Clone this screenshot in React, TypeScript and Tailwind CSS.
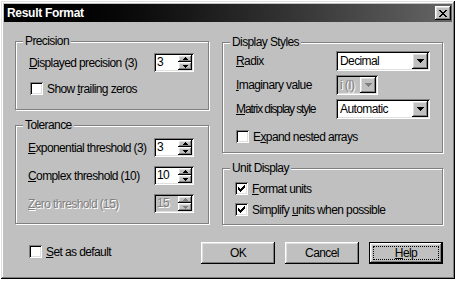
import React from "react";

const raised =
  "shadow-[inset_-1px_-1px_0_#000,inset_1px_1px_0_#fff,inset_-2px_-2px_0_#808080,inset_2px_2px_0_#dfdfdf]";
const sunken =
  "shadow-[inset_1px_1px_0_#808080,inset_-1px_-1px_0_#fff,inset_2px_2px_0_#000,inset_-2px_-2px_0_#dfdfdf]";

function Group({
  label,
  className,
  children,
}: {
  label: string;
  className: string;
  children?: React.ReactNode;
}) {
  return (
    <div
      className={`relative border border-[#808080] shadow-[inset_1px_1px_0_#fff,1px_1px_0_#fff] ${className}`}
    >
      <span className="absolute left-[7px] top-[-8px] bg-[#c0c0c0] px-[2px] leading-[14px] whitespace-nowrap">
        {label}
      </span>
      {children}
    </div>
  );
}

function CheckMark() {
  return (
    <svg width="7" height="7" viewBox="0 0 7 7" shapeRendering="crispEdges" className="block">
      <rect x="6" y="0" width="1" height="1" fill="#000" />
      <rect x="5" y="1" width="2" height="1" fill="#000" />
      <rect x="0" y="2" width="1" height="1" fill="#000" />
      <rect x="4" y="2" width="3" height="1" fill="#000" />
      <rect x="0" y="3" width="2" height="1" fill="#000" />
      <rect x="3" y="3" width="3" height="1" fill="#000" />
      <rect x="0" y="4" width="5" height="1" fill="#000" />
      <rect x="1" y="5" width="3" height="1" fill="#000" />
      <rect x="2" y="6" width="1" height="1" fill="#000" />
    </svg>
  );
}

function Checkbox({ checked, children }: { checked?: boolean; children: React.ReactNode }) {
  return (
    <div className="flex items-center h-[13px] gap-[4px]">
      <span className={`flex items-center justify-center w-[13px] h-[13px] bg-white shrink-0 ${sunken}`}>
        {checked && <CheckMark />}
      </span>
      <span className="leading-[14px] whitespace-nowrap">{children}</span>
    </div>
  );
}

function DownArrow({ color = "#000" }: { color?: string }) {
  return (
    <svg width="7" height="4" viewBox="0 0 7 4" shapeRendering="crispEdges" className="block">
      <rect x="0" y="0" width="7" height="1" fill={color} />
      <rect x="1" y="1" width="5" height="1" fill={color} />
      <rect x="2" y="2" width="3" height="1" fill={color} />
      <rect x="3" y="3" width="1" height="1" fill={color} />
    </svg>
  );
}

function SmallArrow({ up, color = "#000" }: { up?: boolean; color?: string }) {
  return (
    <svg width="5" height="3" viewBox="0 0 5 3" shapeRendering="crispEdges" className="block">
      {up ? (
        <>
          <rect x="2" y="0" width="1" height="1" fill={color} />
          <rect x="1" y="1" width="3" height="1" fill={color} />
          <rect x="0" y="2" width="5" height="1" fill={color} />
        </>
      ) : (
        <>
          <rect x="0" y="0" width="5" height="1" fill={color} />
          <rect x="1" y="1" width="3" height="1" fill={color} />
          <rect x="2" y="2" width="1" height="1" fill={color} />
        </>
      )}
    </svg>
  );
}

function Combo({
  value,
  className,
  disabled,
}: {
  value: string;
  className: string;
  disabled?: boolean;
}) {
  return (
    <div
      className={`flex h-[20px] p-[2px] ${disabled ? "bg-[#c0c0c0]" : "bg-white"} ${sunken} ${className}`}
    >
      <div
        className={`flex-1 pl-[2px] leading-[16px] whitespace-nowrap overflow-hidden ${
          disabled ? "text-[#808080] [text-shadow:1px_1px_0_#fff]" : ""
        }`}
      >
        {value}
      </div>
      <div className={`flex items-center justify-center w-[16px] h-[16px] bg-[#c0c0c0] ${raised}`}>
        <DownArrow color={disabled ? "#808080" : "#000"} />
      </div>
    </div>
  );
}

function Spinner({ value, disabled }: { value: string; disabled?: boolean }) {
  return (
    <div
      className={`flex w-[40px] h-[19px] p-[2px] shrink-0 ${disabled ? "bg-[#c0c0c0]" : "bg-white"} ${sunken}`}
    >
      <div
        className={`flex-1 pl-[1px] leading-[15px] ${
          disabled ? "text-[#808080] [text-shadow:1px_1px_0_#fff]" : ""
        }`}
      >
        {value}
      </div>
      <div className="flex flex-col w-[14px]">
        <div className={`flex items-center justify-center h-[7px] bg-[#c0c0c0] ${raised}`}>
          <SmallArrow up color={disabled ? "#808080" : "#000"} />
        </div>
        <div className={`flex items-center justify-center h-[8px] bg-[#c0c0c0] ${raised}`}>
          <SmallArrow color={disabled ? "#808080" : "#000"} />
        </div>
      </div>
    </div>
  );
}

function Button({ children, def }: { children: React.ReactNode; def?: boolean }) {
  if (def) {
    return (
      <div className="w-[74px] h-[22px] border border-black">
        <div className={`w-full h-full p-[3px] bg-[#c0c0c0] ${raised}`}>
          <div className="w-full h-full border border-dotted border-black flex items-center justify-center leading-[14px]">
            {children}
          </div>
        </div>
      </div>
    );
  }
  return (
    <div
      className={`w-[74px] h-[22px] flex items-center justify-center bg-[#c0c0c0] leading-[14px] ${raised}`}
    >
      {children}
    </div>
  );
}

function CloseGlyph() {
  const rows: [number, number][][] = [
    [[0, 2], [6, 2]],
    [[1, 2], [5, 2]],
    [[2, 4]],
    [[3, 2]],
    [[2, 4]],
    [[1, 2], [5, 2]],
    [[0, 2], [6, 2]],
  ];
  return (
    <svg width="8" height="7" viewBox="0 0 8 7" shapeRendering="crispEdges" className="block">
      {rows.map((r, y) =>
        r.map(([x, w], i) => <rect key={`${y}-${i}`} x={x} y={y} width={w} height={1} fill="#000" />)
      )}
    </svg>
  );
}

export default function App() {
  return (
    <div className="w-[458px] h-[281px] bg-white overflow-hidden pt-[1px] pl-[1px] font-['Liberation_Sans',Arial,sans-serif] text-[12px] tracking-[-0.6px] text-black">
      <div
        className={`w-[454px] h-[278px] bg-[#c0c0c0] p-[3px] flex flex-col shadow-[inset_-1px_-1px_0_#000,inset_1px_1px_0_#dfdfdf,inset_-2px_-2px_0_#808080,inset_2px_2px_0_#fff]`}
      >
        {/* Title bar */}
        <div className="h-[18px] flex items-center justify-between bg-gradient-to-r from-[#000000] to-[#666666]">
          <span className="pl-[3px] text-white font-bold leading-[16px] tracking-[-0.3px]">
            Result Format
          </span>
          <div className={`mr-[1px] w-[16px] h-[14px] flex items-center justify-center bg-[#c0c0c0] ${raised}`}>
            <CloseGlyph />
          </div>
        </div>

        {/* Body */}
        <div className="flex flex-col pl-[11px] pr-[9px] pt-[19px]">
          <div className="flex">
            {/* Left column */}
            <div className="w-[194px] flex flex-col">
              <Group label="Precision" className="h-[69px] pt-[11px] pl-[13px] pr-[14px]">
                <div className="flex items-center justify-between h-[19px]">
                  <span className="leading-[14px]">
                    <u>D</u>isplayed precision (3)
                  </span>
                  <Spinner value="3" />
                </div>
                <div className="mt-[10px] pl-[1px]">
                  <Checkbox>
                    Show <u>t</u>railing zeros
                  </Checkbox>
                </div>
              </Group>
              <Group label="Tolerance" className="mt-[15px] h-[99px] pt-[12px] pl-[12px] pr-[14px]">
                <div className="flex flex-col gap-[9px]">
                  <div className="flex items-center justify-between h-[19px]">
                    <span className="leading-[14px]">
                      <u>E</u>xponential threshold (3)
                    </span>
                    <Spinner value="3" />
                  </div>
                  <div className="flex items-center justify-between h-[19px]">
                    <span className="leading-[14px]">
                      <u>C</u>omplex threshold (10)
                    </span>
                    <Spinner value="10" />
                  </div>
                  <div className="flex items-center justify-between h-[19px]">
                    <span className="leading-[14px] text-[#808080] [text-shadow:1px_1px_0_#fff]">
                      <u>Z</u>ero threshold (15)
                    </span>
                    <Spinner value="15" disabled />
                  </div>
                </div>
              </Group>
            </div>

            {/* Right column */}
            <div className="ml-[13px] mt-[1px] w-[221px] flex flex-col">
              <Group label="Display Styles" className="h-[111px] pt-[8px] pl-[13px]">
                <div className="flex flex-col gap-[4px]">
                  <div className="flex items-center h-[20px]">
                    <span className="w-[100px] leading-[14px]">
                      <u>R</u>adix
                    </span>
                    <Combo value="Decimal" className="w-[94px]" />
                  </div>
                  <div className="flex items-center h-[20px]">
                    <span className="w-[100px] leading-[14px]">
                      <u>I</u>maginary value
                    </span>
                    <Combo value="i (I)" className="w-[42px]" disabled />
                  </div>
                  <div className="flex items-center h-[20px]">
                    <span className="w-[100px] leading-[14px] whitespace-nowrap tracking-[-1.1px]">
                      <u>M</u>atrix display style
                    </span>
                    <Combo value="Automatic" className="w-[94px]" />
                  </div>
                </div>
                <div className="mt-[11px]">
                  <Checkbox>
                    E<u>x</u>pand nested arrays
                  </Checkbox>
                </div>
              </Group>
              <Group label="Unit Display" className="mt-[15px] h-[57px] pt-[13px] pl-[12px]">
                <div className="flex flex-col gap-[8px]">
                  <Checkbox checked>
                    <u>F</u>ormat units
                  </Checkbox>
                  <Checkbox checked>
                    Simplify <u>u</u>nits when possible
                  </Checkbox>
                </div>
              </Group>
            </div>
          </div>

          {/* Bottom row */}
          <div className="mt-[17px] flex items-start justify-between">
            <div className="pl-[14px] mt-[3px]">
              <Checkbox>
                <u>S</u>et as default
              </Checkbox>
            </div>
            <div className="flex gap-[10px]">
              <Button>OK</Button>
              <Button>Cancel</Button>
              <Button def>
                <u>H</u>elp
              </Button>
            </div>
          </div>
        </div>
      </div>
    </div>
  );
}
